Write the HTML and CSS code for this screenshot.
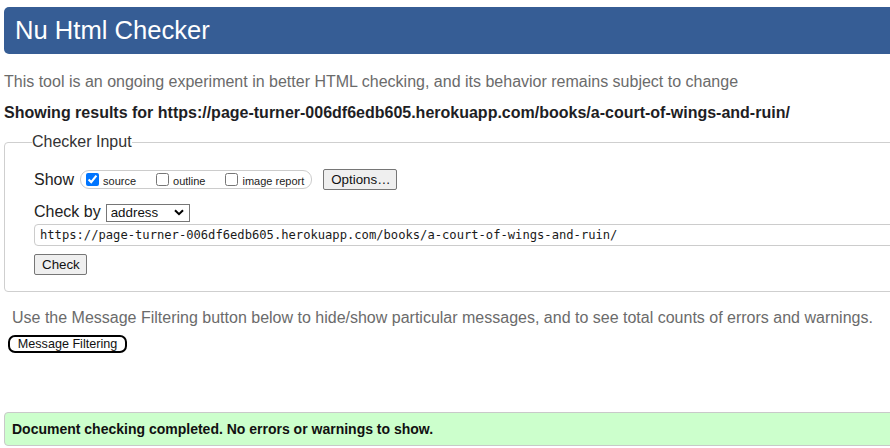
FILE: index.html
```html
<!DOCTYPE html>
<html lang="en">
<head>
<meta charset="utf-8">
<title>Nu Html Checker</title>
<link rel="stylesheet" href="styles.css">
</head>
<body>
<div class="page">
  <h1 class="masthead">Nu Html Checker</h1>
  <p class="intro">This tool is an ongoing experiment in better HTML checking, and its behavior remains subject to change</p>
  <p class="results-for">Showing results for https://page-turner-006df6edb605.herokuapp.com/books/a-court-of-wings-and-ruin/</p>
  <fieldset class="checker">
    <legend class="checker-legend">Checker Input</legend>
    <div class="show-row">
      <span class="row-label">Show</span>
      <span class="show-pill">
        <label class="opt"><input type="checkbox" checked><span>source</span></label>
        <label class="opt"><input type="checkbox"><span>outline</span></label>
        <label class="opt"><input type="checkbox"><span>image report</span></label>
      </span>
      <button class="btn options-btn" type="button">Options…</button>
    </div>
    <div class="checkby-row">
      <span class="row-label">Check by</span>
      <span class="select-wrap">
        <select class="doc-select"><option>address</option></select>
        <svg class="chev" width="10" height="7" viewBox="0 0 10 7"><path d="M1 1.2 L5 5.2 L9 1.2" fill="none" stroke="#000" stroke-width="2"/></svg>
      </span>
    </div>
    <input class="url-input" type="text" value="https://page-turner-006df6edb605.herokuapp.com/books/a-court-of-wings-and-ruin/">
    <div class="check-row"><button class="btn check-btn" type="button">Check</button></div>
  </fieldset>
  <p class="filter-note">Use the Message Filtering button below to hide/show particular messages, and to see total counts of errors and warnings.</p>
  <div class="filter-row"><button class="filter-btn" type="button">Message Filtering</button></div>
  <p class="success">Document checking completed. No errors or warnings to show.</p>
</div>
</body>
</html>
```
FILE: styles.css
```css
html, body {
  margin: 0;
  padding: 0;
  overflow: hidden;
  background: #fff;
}
body {
  font-family: "Liberation Sans", Arial, sans-serif;
  font-size: 16px;
  color: #222;
}
.page {
  width: 940px;
  padding: 7px 0 0 4px;
  display: flex;
  flex-direction: column;
  align-items: flex-start;
}
.masthead {
  margin: 0;
  align-self: stretch;
  height: 47px;
  line-height: 47px;
  padding-left: 11px;
  background: #365d95;
  color: #fff;
  font-weight: normal;
  font-size: 25.6px;
  border-radius: 5px 0 0 5px;
}
.intro {
  margin: 19px 0 0;
  line-height: 18px;
  color: #6b6b6b;
}
.results-for {
  margin: 13px 0 0;
  line-height: 18px;
  font-weight: bold;
  color: #1e1e24;
}
.checker {
  margin: 11px 0 0;
  align-self: stretch;
  border: 1px solid #cfcfcf;
  border-radius: 4px;
  padding: 0 0 16px 29px;
  min-width: 0;
}
.checker-legend {
  padding: 0;
  margin-left: -2px;
  line-height: 18px;
  color: #333;
}
.row-label {
  font-size: 16px;
  color: #222;
}
.show-row {
  margin-top: 18px;
  height: 21px;
  display: flex;
  align-items: center;
}
.show-pill {
  margin-left: 6px;
  height: 17px;
  border: 1px solid #ccc;
  border-radius: 9px;
  display: flex;
  align-items: center;
  gap: 20px;
  padding: 0 7px 0 5px;
}
.opt {
  display: flex;
  align-items: center;
  gap: 4px;
  font-size: 11px;
  color: #222;
}
.opt input {
  margin: 0;
  width: 13px;
  height: 13px;
}
.opt span {
  position: relative;
  top: 1px;
}
.btn {
  font-family: "Liberation Sans", Arial, sans-serif;
  font-size: 13.33px;
  color: #111;
  background: #efefef;
  border: 1px solid #767676;
  border-radius: 2px;
  height: 21px;
  padding: 0 7px;
}
.options-btn {
  margin-left: 11px;
  width: 74px;
}
.checkby-row {
  margin-top: 13px;
  height: 18px;
  display: flex;
  align-items: center;
  gap: 5px;
}
.select-wrap {
  position: relative;
  display: inline-block;
  height: 18px;
}
.doc-select {
  appearance: none;
  -webkit-appearance: none;
  width: 84px;
  height: 18px;
  margin: 0;
  padding: 0 0 0 4px;
  border: 1px solid #767676;
  border-radius: 0;
  background: #fff;
  font-family: "Liberation Sans", Arial, sans-serif;
  font-size: 13.33px;
  color: #111;
}
.chev {
  position: absolute;
  right: 6px;
  top: 6px;
  pointer-events: none;
}
.url-input {
  margin: 3px 0 0;
  width: 900px;
  height: 22px;
  box-sizing: border-box;
  border: 1px solid #ccc;
  border-radius: 4px;
  padding: 0 5px;
  font-family: "DejaVu Sans Mono", "Liberation Mono", monospace;
  font-size: 12.15px;
  color: #1a1a1a;
  display: block;
}
.check-row {
  margin-top: 8px;
  display: flex;
}
.check-btn {
  width: 53px;
}
.filter-note {
  margin: 17px 0 0;
  padding-left: 8px;
  line-height: 18px;
  color: #6b6b6b;
}
.filter-row {
  margin: 8px 0 0 4px;
  display: flex;
}
.filter-btn {
  width: 119px;
  height: 18px;
  padding: 0;
  border: 2px solid #000;
  border-radius: 7px;
  background: #fff;
  font-family: "Liberation Sans", Arial, sans-serif;
  font-size: 12.6px;
  color: #111;
  line-height: 14px;
}
.success {
  margin: 59px 0 0;
  align-self: stretch;
  height: 34px;
  box-sizing: border-box;
  border: 1px solid #c9c9c9;
  border-radius: 4px;
  background: #ccffcc;
  padding-left: 7px;
  line-height: 32px;
  font-size: 14px;
  font-weight: bold;
  color: #111;
}
```
